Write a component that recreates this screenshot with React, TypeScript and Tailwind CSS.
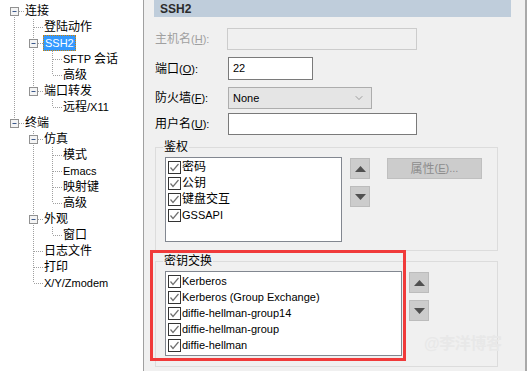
import { ChevronDown } from "lucide-react"

type TreeNode = { label: string; children?: TreeNode[]; selected?: boolean }

const tree: TreeNode[] = [
  {
    label: "连接",
    children: [
      { label: "登陆动作" },
      { label: "SSH2", selected: true, children: [{ label: "SFTP 会话" }, { label: "高级" }] },
      { label: "端口转发", children: [{ label: "远程/X11" }] },
    ],
  },
  {
    label: "终端",
    children: [
      { label: "仿真", children: [{ label: "模式" }, { label: "Emacs" }, { label: "映射键" }, { label: "高级" }] },
      { label: "外观", children: [{ label: "窗口" }] },
      { label: "日志文件" },
      { label: "打印" },
      { label: "X/Y/Zmodem" },
    ],
  },
]

type Row = { node: TreeNode; guides: boolean[]; hasNext: boolean; first: boolean }

const flatten = (nodes: TreeNode[], guides: boolean[], out: Row[], root: boolean) => {
  nodes.forEach((node, i) => {
    const hasNext = i < nodes.length - 1
    out.push({ node, guides, hasNext, first: root && i === 0 })
    if (node.children) flatten(node.children, [...guides, hasNext], out, false)
  })
  return out
}

const rows = flatten(tree, [], [], true)

// latin runs are drawn a bit smaller, like Segoe UI next to YaHei
const Txt = ({ s }: { s: string }) => (
  <>
    {s.split(/([\u4e00-\u9fff]+)/).filter(Boolean).map((part, i) =>
      /[\u4e00-\u9fff]/.test(part) ? (
        <span key={i} className="text-[12px]">{part}</span>
      ) : (
        <span key={i} className="text-[11px]">{part}</span>
      )
    )}
  </>
)

const Guide = ({ on }: { on: boolean }) => (
  <svg width="19" height="16" className="shrink-0">
    {on && <line x1="9.5" y1="0" x2="9.5" y2="16" stroke="#a0a0a0" strokeDasharray="1 1" />}
  </svg>
)

const Joint = ({ row }: { row: Row }) => (
  <svg width="19" height="16" className="shrink-0">
    {!row.first && <line x1="9.5" y1="0" x2="9.5" y2="8" stroke="#a0a0a0" strokeDasharray="1 1" />}
    {row.hasNext && <line x1="9.5" y1="8" x2="9.5" y2="16" stroke="#a0a0a0" strokeDasharray="1 1" />}
    <line x1="10" y1="8.5" x2="19" y2="8.5" stroke="#a0a0a0" strokeDasharray="1 1" />
    {row.node.children && (
      <g>
        <rect x="5.5" y="4.5" width="8" height="8" fill="#f4f4f4" stroke="#919191" />
        <line x1="7.5" y1="8.5" x2="11.5" y2="8.5" stroke="#3c5a8c" />
      </g>
    )}
  </svg>
)

const Check = () => (
  <span className="w-[13px] h-[13px] border border-[#333] bg-white flex items-center justify-center shrink-0">
    <svg width="11" height="11" viewBox="0 0 11 11">
      <path d="M1.5 5.5 L4 8.5 L9.5 2" fill="none" stroke="#707070" strokeWidth="1.2" />
    </svg>
  </span>
)

const Arrow = ({ up }: { up?: boolean }) => (
  <div className="w-[20px] h-[21px] bg-[#cccccc] border border-[#bcbcbc] flex items-center justify-center">
    <svg width="11" height="6" viewBox="0 0 11 6">
      <polygon points={up ? "0,6 11,6 5.5,0" : "0,0 11,0 5.5,6"} fill="#505050" />
    </svg>
  </div>
)

const CheckList = ({ items, width }: { items: string[]; width: string }) => (
  <div className={`${width} h-[85px] bg-white border border-[#828790] pt-[1px] pl-[2px]`}>
    {items.map((item) => (
      <div key={item} className="h-[16px] flex items-center gap-[1px]">
        <Check />
        <span className="leading-none whitespace-nowrap">
          <Txt s={item} />
        </span>
      </div>
    ))}
  </div>
)

const App = () => {
  return (
    <div
      className="w-[527px] h-[371px] flex overflow-hidden relative text-[12px] text-black"
      style={{ fontFamily: '"Liberation Sans", "Noto Sans CJK SC", sans-serif' }}
    >
      <div className="w-[144px] h-full bg-white border-r border-[#a0a0a0] pt-[3px] pl-[5px]">
        {rows.map((row, i) => (
          <div key={i} className="h-[16px] flex items-center">
            {row.guides.map((g, j) => (
              <Guide key={j} on={g} />
            ))}
            <Joint row={row} />
            <span
              className={
                row.node.selected
                  ? "h-[16px] px-[2px] flex items-center bg-[#3399ff] text-white outline-1 outline-dotted outline-[#d08000] -outline-offset-1"
                  : "ml-[1px] leading-none whitespace-nowrap"
              }
            >
              <Txt s={row.node.label} />
            </span>
          </div>
        ))}
      </div>

      <div className="flex-1 h-full bg-[#f0f0f0] pl-[10px] flex flex-col border-r-2 border-[#a9a9a9]">
        <div className="w-[357px] h-[17px] bg-[#bfcddb] pl-[6px] flex items-center font-bold text-[#2b2b2b]">SSH2</div>

        <div className="pl-[1px] flex flex-col">
          <div className="flex items-center mt-[11px] h-[22px]">
            <span className="w-[72px] text-[#a0a0a0]">
              主机名<span className="text-[11px]">(<u>H</u>):</span>
            </span>
            <div className="w-[190px] h-[22px] border border-[#cccccc] bg-[#f0f0f0]" />
          </div>
          <div className="flex items-center mt-[7px] h-[23px]">
            <span className="w-[73px]">
              端口<span className="text-[11px]">(<u>O</u>):</span>
            </span>
            <div className="w-[85px] h-[23px] border border-[#7a7a7a] bg-white pl-[4px] flex items-center text-[11px]">22</div>
          </div>
          <div className="flex items-center mt-[7px] h-[22px]">
            <span className="w-[73px]">
              防火墙<span className="text-[11px]">(<u>F</u>):</span>
            </span>
            <div className="w-[144px] h-[22px] border border-[#adadad] bg-[#e5e5e5] pl-[4px] pr-[6px] flex items-center justify-between">
              <span className="text-[11px]">None</span>
              <ChevronDown size={12} strokeWidth={1} color="#555" />
            </div>
          </div>
          <div className="flex items-center mt-[4px] h-[22px]">
            <span className="w-[73px]">
              用户名<span className="text-[11px]">(<u>U</u>):</span>
            </span>
            <div className="w-[189px] h-[22px] border border-[#7a7a7a] bg-white" />
          </div>

          <fieldset className="mt-[6px] w-[343px] h-[110px] border border-[#dcdcdc] pl-[9px] pr-0 pb-0 pt-0">
            <legend className="px-[1px] -ml-[2px] leading-none">鉴权</legend>
            <div className="flex items-start gap-[8px] mt-[4px]">
              <CheckList items={["密码", "公钥", "键盘交互", "GSSAPI"]} width="w-[177px]" />
              <div className="flex flex-col gap-[7px] pt-[1px]">
                <Arrow up />
                <Arrow />
              </div>
              <div className="ml-[9px] mt-[1px] w-[95px] h-[21px] bg-[#cccccc] border border-[#bfbfbf] text-[#8d8d8d] flex items-center justify-center">
                属性<span className="text-[11px]">(<u>E</u>)...</span>
              </div>
            </div>
          </fieldset>

          <fieldset className="mt-[4px] w-[343px] h-[112px] border border-[#dcdcdc] pl-[9px] pr-0 pb-0 pt-0">
            <legend className="px-[1px] -ml-[2px] leading-none">密钥交换</legend>
            <div className="flex items-start gap-[7px] mt-[4px]">
              <CheckList
                items={["Kerberos", "Kerberos (Group Exchange)", "diffie-hellman-group14", "diffie-hellman-group", "diffie-hellman"]}
                width="w-[237px]"
              />
              <div className="flex flex-col gap-[7px] pt-[1px]">
                <Arrow up />
                <Arrow />
              </div>
            </div>
          </fieldset>
        </div>
      </div>

      <div className="absolute left-[150px] top-[250px] w-[256px] h-[111px] border-[3px] border-[#f03a3a]" />
      <div className="absolute left-[424px] top-[332px] text-[16px] font-bold text-[#e8e8e8] tracking-tight">@李洋博客</div>
    </div>
  )
}

export default App
